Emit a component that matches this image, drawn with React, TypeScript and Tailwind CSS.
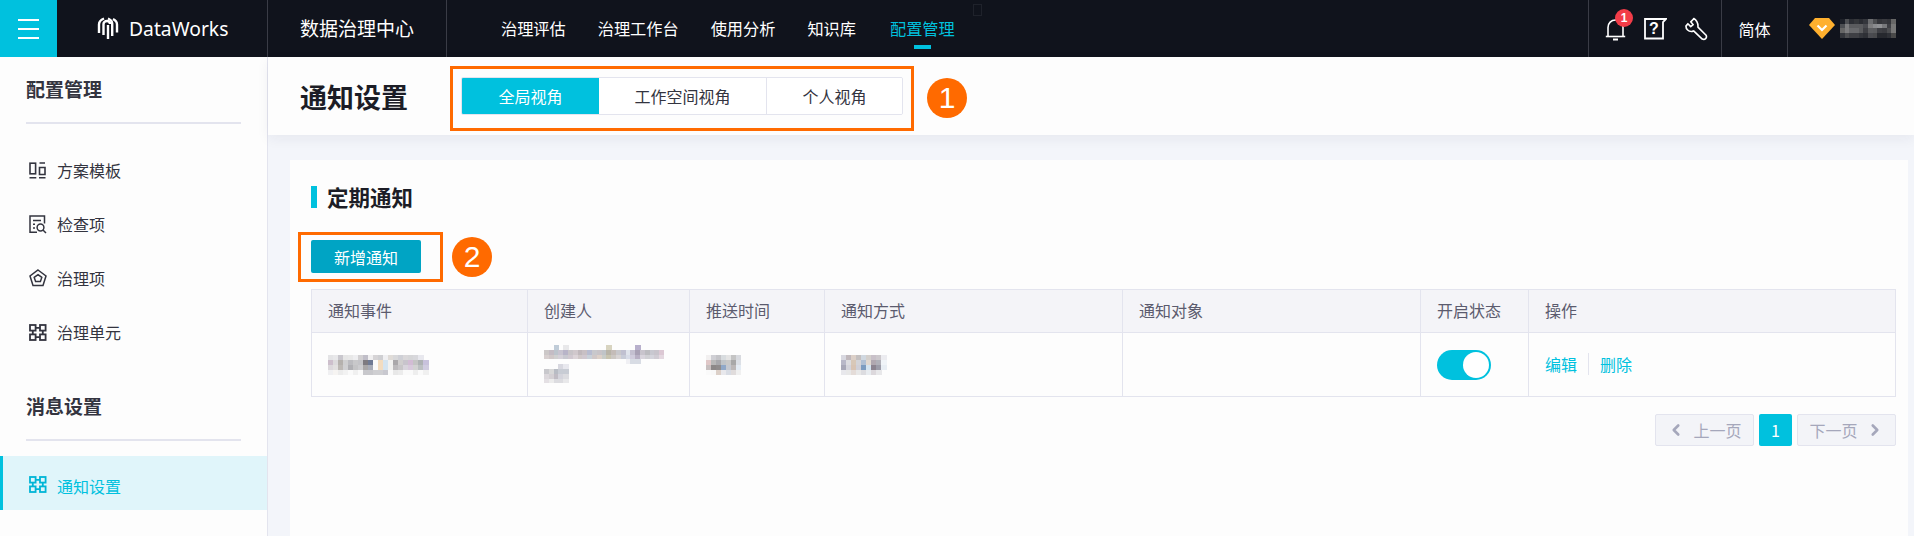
import React from "react";
import { ChevronLeft, ChevronRight } from "lucide-react";

function Mosaic({ rows, cell = 5, className = "" }: { rows: string[][]; cell?: number; className?: string }) {
  const w = Math.max(...rows.map((r) => r.length));
  return (
    <svg width={w * cell} height={rows.length * cell} className={"block " + className} shapeRendering="crispEdges">
      {rows.map((r, y) =>
        r.map((c, x) => (c ? <rect key={x + "-" + y} x={x * cell} y={y * cell} width={cell + 0.5} height={cell} fill={c} /> : null))
      )}
    </svg>
  );
}

const m1 = [
  ["#e4e4e6","#e8e8ea","#c9c7cd","#e6e6e6","#e8e8e8","#eeeef0","#d2d0d2","#c0bec8","#f0eff0","#d6d4d6","#cfcfd2","#f0f0f2","#e0dcd8","#d8d8da","#cfd0d6","#dad8da","#d6d6d8","#d8d8dc","#e8e8ee","",""],
  ["#cdbfcc","#dcdadc","#b5b1ad","#cfcfd0","#bcbcc0","#c8c8ca","#c4c4c8","#7d7a80","#6f7a94","#fafafa","#f2dcc0","#d4e4f0","#f2f2f0","#aaa8aa","#d0cece","#c8c4cc","#d2bcd4","#c4c4c4","#aeb2b4","#c8c2dc",""],
  ["#dcd8dc","#e2e0e0","#bdb9b5","#d0d0d2","#b0b0b4","#c4c4c6","#cccccf","#a9a7a8","#a8acb8","#fafafa","#f2dcc0","#d4e4f0","#f2f2f0","#bcbabc","#c8c6c8","#d8d4dc","#d8cadc","#d2d2d2","#bcc0c2","#d0cce0",""],
  ["#f0f0f2","#f6f4f2","#ececec","#f2f2f2","#fafafa","#f0f0f0","#fafafa","#c8c8cc","#c8c8cc","#cfcfd2","#cfcfd2","#c8c8cf","#fafafa","#e8e8e8","#ececec","#fafafa","#fafafa","#eeeeee","#fafafa","#f0f0f0",""],
];
const m2 = [
  ["","","#c0ccd8","","#e8e8ea","","","","","","","","","#d8d4c0","","","","","","#b8b0cc","","","","",""],
  ["#ccc8c8","#c4bcc4","#bcc4cc","#c8c4d0","#b8b4c8","#c8c4c8","#d0c8cc","#c0b8bc","#c8c0c4","#b8bcd0","#c8c8cc","#c8c4c8","#c0c4c8","#b8b4a8","#c4bcb8","#c8c8cc","#c0c0d0","#e0e4ec","#c4c0d0","#a8a0b4","#c8c4cc","#bcbcc0","#c8c8d0","#c8c4cc","#dcc8d4"],
  ["#d8d0d0","#d0c8c8","#d0d0d0","#d4d0d8","#c8c8d0","#d0c8d0","#dcd4d8","#d0c8c8","#d0c8d0","#c8d0d8","#d0c8c8","#dcd0c8","#c8ccc8","#c8c4b0","#ccc8c4","#d8d4d4","#c8ccd8","#d8dce8","#d0ccdc","#b8b0c4","#d8d4dc","#d0d0d4","#d4d4dc","#d0ccd4","#e4d8e0"],
  ["","","","","","","","","","","","","","","","","","#f0f0f4","#d8dce4","#d8dce4","","","","",""],
  ["","","","#d8d8e0","#e8e8ee"],
  ["#c8c8cc","#d8d8d8","#b8bcc4","#c8ccd4","#c8ccd4"],
  ["#dcd8dc","#d4d0d4","#c0bcc4","#d4d4dc","#dcdce0"],
  ["#e4e0e4","#ececec","#dcdce0","#dcdce0","#e8e8ea"],
];
const m3 = [
  ["#f2f0f0","#cfcfd4","#c4c4c8","#d8dcdf","#e4e4e4","#c4c4c4","#d8dadf"],
  ["#e0c8c8","#b8b8b8","#a8a8ac","#c0c4c8","#c8c8c8","#a8a8a8","#dce0e6"],
  ["#c8c0c0","#8c8888","#908c8c","#90a8c8","#c4c8d0","#bcb8b8","#e4ecf4"],
  ["#fafafa","#f8f8f8","#dcd0c8","#e8e8ec","#d8dce4","#e0dcdc","#f0f0f0"],
];
const m4 = [
  ["#d8d8e0","#c0b8bc","#dcd0c8","#c4c0c0","#d0d8e0","#d4d0cc","#c8c0c8","#ccc8cc","#ececf0","",""],
  ["#b8b8c8","#dcdce0","#d8c8b8","#d4d4d8","#b0c0d4","#e0d8d0","#b0a8b0","#b0b0b8","#f0f4f8","",""],
  ["#a8a8b8","#d4d4dc","#d8c4b4","#d0d0d8","#7c9cc0","#d4e4f0","#8c8490","#9c9ca8","#e8eef4","",""],
  ["#e8e8ec","#e8e8e8","#e4dcd8","#e8e8e8","#dcdce0","#e8ecf0","#dcd8dc","#e8e8ea","","",""],
];
const g = "#7c7c7e";
const m5 = [
  ["#1d2028","#4c4e52","#2c2e34","#34363a","#2a2c32","#34363c","#6c6d70","#4c4d50","#34353a","#3a3b40","#34353a","#666"],
  ["#4c4e52",g,"#5a5b5e","#5a5b5e","#5a5b5e","#4a4b50",g,"#8a8b8e","#909194","#78797c","#3e3f44","#777"],
  ["#666",g,"#68696c","#68696c","#5a5b5e","#3e3f44","#5c5d60","#5a5b5e","#3e3f44","#3a3b40","#4c4d50","#777"],
  ["#34363c","#4c4d50","#3e3f44","#3e3f44","#34363c","#2e3036","#4a4b50","#48494c","#26282e","#26282e","#2e3036","#484848"],
];

const border = "border-[#e3e4ee]";

function IconLayout() {
  return (
    <svg width="17" height="17" viewBox="0 0 17 17" fill="none" stroke="#33343f" strokeWidth="1.6">
      <rect x="1" y="1.2" width="5.6" height="10.6" />
      <path d="M10.5 1h5.5M10.5 5.5h5.5v7h-5.5zM0.5 15.8h6.8M10 15.8h6.5" />
    </svg>
  );
}
function IconCheck() {
  return (
    <svg width="18" height="19" viewBox="0 0 18 19" fill="none" stroke="#33343f" strokeWidth="1.5">
      <path d="M8 17.2H1V1h14.5v7.5" />
      <path d="M4 5.5h8M4 9.2h2M4 13h2" />
      <circle cx="11.5" cy="12.5" r="3.4" />
      <path d="M14 15l3 3" />
    </svg>
  );
}
function IconPentagon() {
  return (
    <svg width="18" height="18" viewBox="0 0 18 18" fill="none" stroke="#33343f" strokeWidth="1.5">
      <path d="M9 1l8 6-3 9.5H4L1 7z" />
      <path d="M9 5.6l3.8 2.8-1.4 4.2H6.6L5.2 8.4z" />
    </svg>
  );
}
function IconGrid({ color = "#33343f" }: { color?: string }) {
  return (
    <svg width="18" height="17" viewBox="0 0 18 17" fill="none" stroke={color} strokeWidth="1.8">
      <rect x="1" y="1" width="5.6" height="5.6" />
      <rect x="11" y="1" width="5.6" height="5.6" />
      <rect x="1" y="10.4" width="5.6" height="5.6" />
      <rect x="11" y="10.4" width="5.6" height="5.6" />
      <path d="M6.6 3.8H11M6.6 13.2H11M3.8 6.6v3.8M13.8 6.6v3.8" />
    </svg>
  );
}
function Logo() {
  return (
    <svg width="22" height="23" viewBox="0 0 22 23" fill="none" stroke="#fff" strokeWidth="2.4">
      <path d="M2 16V7.5C2 4.500 4.500 2.500 7 1.500" />
      <path d="M6.500 18V7C6.500 5.500 8 4 10 4s3 1.500 3 3" />
      <path d="M11 22V8" />
      <path d="M15.200 19V6.500C15.200 4 13.500 2.500 11 1.500" />
      <path d="M20 15.500V7.500C20 5 18 3 16 2" />
    </svg>
  );
}

function Item({ icon, label }: { icon: React.ReactNode; label: string }) {
  return (
    <div className="flex h-[54px] items-center pl-[29px] text-[16px] text-[#33343f]">
      <span className="flex w-[28px] shrink-0">{icon}</span>
      {label}
    </div>
  );
}

export default function App() {
  return (
    <div className="flex h-[536px] w-[1914px] flex-col overflow-hidden bg-[#f3f5fa] font-['Noto_Sans_CJK_SC','Noto_Sans',sans-serif]">
      <header className="flex h-[57px] shrink-0 items-stretch bg-[#10131c] text-white">
        <div className="flex w-[57px] flex-col items-center justify-center gap-[7px] bg-[#00c1de]">
          <span className="h-[2px] w-[21px] bg-white" />
          <span className="h-[2px] w-[21px] bg-white" />
          <span className="h-[2px] w-[21px] bg-white" />
        </div>
        <div className="flex w-[211px] items-center border-r border-[#3a3c46] pl-[40px]">
          <Logo />
          <span className="ml-[10px] font-['Noto_Sans',sans-serif] text-[19.3px] leading-none">DataWorks</span>
        </div>
        <div className="flex w-[179px] items-center border-r border-[#3a3c46] pl-[32px] text-[19px]">数据治理中心</div>
        <nav className="relative flex items-center gap-[32px] pl-[54px] text-[16.2px]">
          <span>治理评估</span>
          <span>治理工作台</span>
          <span>使用分析</span>
          <span>知识库</span>
          <span className="relative ml-[2px] flex h-full items-center text-[#00c1de]">
            配置管理
            <span className="absolute bottom-[8px] left-[24px] h-[4px] w-[17px] bg-[#00c1de]" />
          </span>
          <span className="absolute left-[526px] top-[4px] h-[12px] w-[9px] border border-[#1f222b]" />
        </nav>
        <div className="ml-auto flex w-[133px] items-center border-l border-[#3a3c46] pl-[16px]">
          <span className="relative flex w-[39px]">
            <svg width="21" height="24" viewBox="0 0 21 24" fill="none" stroke="#fff" strokeWidth="1.6">
              <path d="M3 19V10.500C3 6 6.200 3 10.500 3S18 6 18 10.500V19" />
              <path d="M0.800 19.500h19.400" />
              <path d="M8 22.500h5" strokeWidth="2" />
            </svg>
            <span className="absolute left-[10px] top-[-8px] flex h-[18px] w-[18px] items-center justify-center rounded-full bg-[#f23c48] font-['Liberation_Sans',sans-serif] text-[12px] font-bold leading-none">1</span>
          </span>
          <span className="flex w-[41px]">
            <svg width="23" height="23" viewBox="0 0 23 23" fill="none" stroke="#fff" strokeWidth="1.8">
              <path d="M1 2h21l-3 3v16.500H1z" />
            </svg>
            <span className="-ml-[23px] w-[20px] text-center font-['Liberation_Sans',sans-serif] text-[16px] font-bold leading-[23px]">?</span>
          </span>
          <svg width="23" height="24" viewBox="0 0 24 24" fill="none" stroke="#fff" strokeWidth="1.7" strokeLinejoin="round">
            <path d="M9.500 1.500L6 5l2.500 3L6 10 3 7 1 9.500c0 3 2.500 6 6.500 5.500l1.500-.500 9 8.500c1 .5 2.500.5 3.500-.5s1-2.500.5-3.500l-8.500-8.500c.5-4-2-8-4.500-9z" transform="translate(0 -.5)" />
          </svg>
        </div>
        <div className="flex w-[66px] items-center justify-center border-l border-[#3a3c46] text-[16px]">简体</div>
        <div className="flex w-[127px] items-center border-l border-[#3a3c46] pl-[21px]">
          <svg width="26" height="21" viewBox="0 0 26 21">
            <path d="M6 0h14l6 7-13 14L0 7z" fill="#ffb02e" />
            <path d="M8.500 7.500L13 12l4.500-4.500" fill="none" stroke="#fff" strokeWidth="2.200" />
          </svg>
          <Mosaic rows={m5} cell={4.67} className="ml-[5px]" />
        </div>
      </header>

      <div className="flex min-h-0 flex-1">
        <aside className={`w-[268px] shrink-0 border-r ${border} bg-[#fdfdfd]`}>
          <div className="mx-[26px] flex h-[67px] items-center border-b-2 border-[#e3e4ee] text-[19px] font-bold text-[#33343f]">配置管理</div>
          <div className="mt-[19px]">
            <Item icon={<IconLayout />} label="方案模板" />
            <Item icon={<IconCheck />} label="检查项" />
            <Item icon={<IconPentagon />} label="治理项" />
            <Item icon={<IconGrid />} label="治理单元" />
          </div>
          <div className="mx-[26px] mt-[15px] flex h-[67px] items-center border-b-2 border-[#e3e4ee] text-[19px] font-bold text-[#33343f]">消息设置</div>
          <div className="mt-[15px] flex h-[54px] items-center border-l-[3px] border-[#00c1de] bg-[#e0f5fa] pl-[26px] pt-[6px] text-[16px] text-[#00c1de]">
            <span className="-mt-[4px] flex w-[28px] shrink-0"><IconGrid color="#00b5d6" /></span>
            通知设置
          </div>
        </aside>

        <main className="min-w-0 flex-1">
          <div className="flex h-[78px] items-center bg-[#fdfdfd] pl-[32px] shadow-[0_4px_12px_rgba(30,35,70,0.06)]">
            <h1 className="text-[27px] font-bold leading-none text-[#1c1d26]">通知设置</h1>
            <div className="relative ml-[53px] flex h-[38px]">
              <div className={`flex overflow-hidden rounded-[2px] border ${border} text-[16px] text-[#33343f]`}>
                <div className="flex w-[137px] items-center justify-center bg-[#00c1de] text-white">全局视角</div>
                <div className={`flex w-[168px] items-center justify-center border-r ${border} bg-white`}>工作空间视角</div>
                <div className="flex w-[135px] items-center justify-center bg-white">个人视角</div>
              </div>
              <span className="absolute -bottom-[16px] -left-[11px] -right-[11px] -top-[11px] border-[3px] border-[#ff6a00]" />
              <span className="absolute left-[466px] top-[1px] flex h-[40px] w-[40px] items-center justify-center rounded-full bg-[#ff6a00] font-['Liberation_Sans',sans-serif] text-[30px] leading-none text-white">1</span>
            </div>
          </div>

          <section className="ml-[22px] mr-[6px] mt-[25px] h-[400px] bg-[#fdfdfd] pl-[21px] pr-[12px] pt-[26px]">
            <div className="flex h-[22px] items-center border-l-[6px] border-[#00c1de] pl-[10px] text-[21.5px] font-bold text-[#1c1d26]">定期通知</div>
            <div className="relative mt-[32px] w-[110px]">
              <button className="flex h-[33px] w-[110px] items-center justify-center rounded-[2px] bg-[#00a4c4] text-[16px] text-white">新增通知</button>
              <span className="absolute -bottom-[9px] -left-[13px] -right-[22px] -top-[8px] border-[3px] border-[#ff6a00]" />
              <span className="absolute left-[141px] top-[-3px] flex h-[40px] w-[40px] items-center justify-center rounded-full bg-[#ff6a00] font-['Liberation_Sans',sans-serif] text-[30px] leading-none text-white">2</span>
            </div>

            <table className={`mt-[16px] w-[1585px] table-fixed border-collapse border ${border} text-[16px]`}>
              <colgroup>
                <col className="w-[216px]" />
                <col className="w-[162px]" />
                <col className="w-[135px]" />
                <col className="w-[298px]" />
                <col className="w-[298px]" />
                <col className="w-[108px]" />
                <col />
              </colgroup>
              <thead>
                <tr className="h-[43px] bg-[#f4f4f8] text-left text-[#5b5b6e]">
                  {["通知事件", "创建人", "推送时间", "通知方式", "通知对象", "开启状态", "操作"].map((h) => (
                    <th key={h} className={`border ${border} px-[16px] pb-[2px] font-normal`}>{h}</th>
                  ))}
                </tr>
              </thead>
              <tbody>
                <tr className="h-[64px]">
                  <td className={`border ${border} px-[16px]`}><Mosaic rows={m1} /></td>
                  <td className={`border ${border} px-[16px]`}><Mosaic rows={m2} cell={4.8} /></td>
                  <td className={`border ${border} px-[16px]`}><Mosaic rows={m3} /></td>
                  <td className={`border ${border} px-[16px]`}><Mosaic rows={m4} /></td>
                  <td className={`border ${border} px-[16px]`} />
                  <td className={`border ${border} px-[16px]`}>
                    <span className="flex h-[30px] w-[54px] items-center justify-end rounded-full bg-[#00c1de] pr-[2px]">
                      <span className="h-[26px] w-[26px] rounded-full bg-white" />
                    </span>
                  </td>
                  <td className={`border ${border} px-[16px] pb-[2px]`}>
                    <div className="flex items-center text-[#00c1de]">
                      <span>编辑</span>
                      <span className={`mx-[11px] h-[22px] border-l ${border}`} />
                      <span>删除</span>
                    </div>
                  </td>
                </tr>
              </tbody>
            </table>

            <div className="mt-[17px] flex w-[1585px] justify-end gap-[5px] text-[16px] text-[#a5a7bb]">
              <div className={`flex h-[32px] w-[99px] items-center justify-center gap-[8px] rounded-[2px] border ${border} bg-[#f3f4f8]`}>
                <ChevronLeft size={18} strokeWidth={3.5} />上一页
              </div>
              <div className="flex h-[32px] w-[33px] items-center justify-center rounded-[2px] bg-[#00c1de] text-white">1</div>
              <div className={`flex h-[32px] w-[99px] items-center justify-center gap-[8px] rounded-[2px] border ${border} bg-[#f3f4f8]`}>
                下一页<ChevronRight size={18} strokeWidth={3.5} />
              </div>
            </div>
          </section>
        </main>
      </div>
    </div>
  );
}
